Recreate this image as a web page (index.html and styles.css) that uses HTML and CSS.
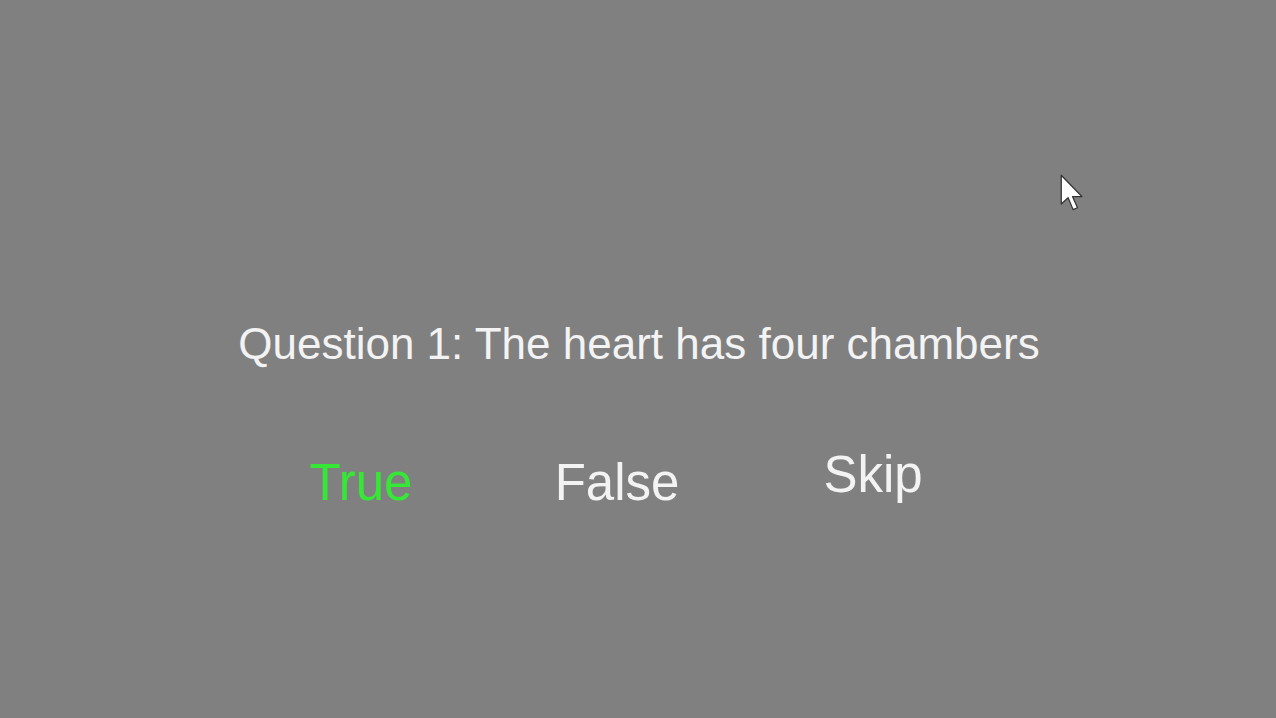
FILE: index.html
```html
<!DOCTYPE html>
<html>
<head>
<meta charset="utf-8">
<link rel="stylesheet" href="styles.css">
</head>
<body>
<div class="screen">
  <div class="question">Question 1: The heart has four chambers</div>
  <div class="answers">
    <div class="answer answer-low answer-true">True</div>
    <div class="answer answer-low">False</div>
    <div class="answer">Skip</div>
  </div>
  <svg class="cursor" width="30" height="45" viewBox="0 0 24 36">
    <path d="M1 1 L1 24 L6.5 19 L10.5 28.5 L14 27 L10 18 L17.5 18 Z" fill="#ffffff" stroke="#333333" stroke-width="1" stroke-linejoin="round"/>
  </svg>
</div>
</body>
</html>
```

FILE: styles.css
```css
html, body {
  margin: 0;
  padding: 0;
  background: #808080;
}
.screen {
  position: relative;
  width: 1276px;
  height: 718px;
  overflow: hidden;
  padding-top: 319px;
  box-sizing: border-box;
  font-family: "Liberation Sans", Arial, sans-serif;
  color: #f3f3f3;
}
.question {
  font-size: 44px;
  line-height: 50px;
  height: 50px;
  text-align: center;
  white-space: nowrap;
  padding-left: 2px;
}
.answers {
  display: flex;
  align-items: flex-start;
  margin-top: 76px;
  padding-left: 233px;
}
.answer {
  width: 256px;
  text-align: center;
  font-size: 51px;
  line-height: 60px;
}
.answer-low {
  padding-top: 8px;
}
.answer-true {
  color: #36e836;
}
.cursor {
  position: absolute;
  left: 1060px;
  top: 174px;
}
```
